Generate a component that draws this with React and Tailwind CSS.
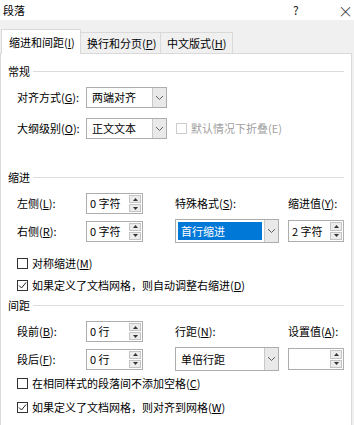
import React from "react";

const font = { fontFamily: '"Microsoft YaHei UI", "Noto Sans CJK SC", "Noto Sans", sans-serif' };

function Key({ label, k, colon = true }) {
  return (
    <span>
      {label}(<u>{k}</u>){colon ? ":" : ""}
    </span>
  );
}

function SectionHeader({ title, className = "" }) {
  return (
    <div className={`flex items-center h-[14px] pl-[7px] pr-[7px] ${className}`}>
      <span className="w-[25px] shrink-0">{title}</span>
      <div className="flex-1 h-px bg-[#dcdcdc]" />
    </div>
  );
}

function Chevron() {
  return (
    <svg width="9" height="6" viewBox="0 0 9 6">
      <path d="M1 1 L4.5 4.5 L8 1" fill="none" stroke="#606060" strokeWidth="1" />
    </svg>
  );
}

function Select({ value, width, selected = false, height = "h-[21px]" }) {
  return (
    <div className={`flex ${width} ${height} border border-[#adadad] bg-white`}>
      <div className="flex-1 flex items-center px-[2px] py-[2px]">
        <div
          className={`h-full w-full flex items-center pl-[3px] ${
            selected ? "bg-[#0078d7] text-white" : ""
          }`}
        >
          {value}
        </div>
      </div>
      <div className="w-[14px] flex items-center justify-center bg-[#e9e9e9] border-l border-[#c8c8c8]">
        <Chevron />
      </div>
    </div>
  );
}

function Spin({ value, width = "w-[57px]", height = "h-[21px]" }) {
  return (
    <div className={`flex ${width} ${height} border border-[#adadad] bg-white`}>
      <div className="flex-1 flex items-center pl-[3px]">{value}</div>
      <div className="w-[12px] mr-[1px] flex flex-col justify-center gap-[1px] py-[1px]">
        <div className="flex-1 flex items-center justify-center bg-[#ececec] border border-[#c4c4c4]">
          <svg width="5" height="3" viewBox="0 0 5 3">
            <path d="M0 3 L2.5 0 L5 3 Z" fill="#333" />
          </svg>
        </div>
        <div className="flex-1 flex items-center justify-center bg-[#ececec] border border-[#c4c4c4]">
          <svg width="5" height="3" viewBox="0 0 5 3">
            <path d="M0 0 L2.5 3 L5 0 Z" fill="#333" />
          </svg>
        </div>
      </div>
    </div>
  );
}

function Check({ checked = false, disabled = false, children, className = "" }) {
  return (
    <div className={`flex items-center h-[14px] ${className}`}>
      <div
        className={`w-[11px] h-[11px] border bg-white flex items-center justify-center mr-[4px] ${
          disabled ? "border-[#cccccc]" : "border-[#333333]"
        }`}
      >
        {checked && (
          <svg width="9" height="9" viewBox="0 0 9 9">
            <path d="M1 4.5 L3.5 7 L8 1.5" fill="none" stroke="#222" strokeWidth="1" />
          </svg>
        )}
      </div>
      <span className={disabled ? "text-[#a0a0a0]" : ""}>{children}</span>
    </div>
  );
}

function Row({ label, control, label3, control3, label4, control4, className = "", h = "h-[21px]" }) {
  return (
    <div className={`flex items-center pl-[16px] ${h} ${className}`}>
      <div className="w-[69px]">{label}</div>
      <div className="w-[89px]">{control}</div>
      <div className="w-[113px]">{control3 || label3}</div>
      <div>{control4 || label4}</div>
    </div>
  );
}

export default function App() {
  return (
    <div
      className="w-[354px] h-[425px] bg-[#f0f0f0] overflow-hidden text-[11px] text-black leading-none flex flex-col"
      style={font}
    >
      {/* title bar */}
      <div className="h-[20px] bg-white flex items-center pl-[3px] shrink-0">
        <span className="flex-1 text-[11px]">段落</span>
        <span className="w-[45px] text-[12px] text-[#222]">?</span>
        <span className="w-[16px] text-[15px] font-light text-[#222]">×</span>
      </div>

      {/* tabs */}
      <div className="flex items-end pt-[9px] pl-[1px] shrink-0 relative z-10">
        <div className="w-[80px] h-[25px] bg-white border border-b-0 border-[#d9d9d9] flex items-center pl-[7px] -mb-px">
          缩进和间距(<u>I</u>)
        </div>
        <div className="w-[80px] h-[21px] border border-l-0 border-b-0 border-[#d9d9d9] flex items-center pl-[6px]">
          换行和分页(<u>P</u>)
        </div>
        <div className="w-[72px] h-[21px] border border-l-0 border-b-0 border-[#d9d9d9] flex items-center pl-[6px]">
          中文版式(<u>H</u>)
        </div>
      </div>

      {/* panel */}
      <div className="flex-1 ml-0 mr-[2px] bg-white border border-b-0 border-[#d9d9d9]">
        <SectionHeader title="常规" className="mt-[10px]" />

        <div className="flex items-center pl-[16px] h-[21px] mt-[9px]">
          <div className="w-[69px]"><Key label="对齐方式" k="G" /></div>
          <Select value="两端对齐" width="w-[81px]" />
        </div>
        <div className="flex items-center pl-[16px] h-[21px] mt-[10px]">
          <div className="w-[69px]"><Key label="大纲级别" k="O" /></div>
          <Select value="正文文本" width="w-[81px]" />
          <Check disabled className="ml-[9px]">默认情况下折叠(E)</Check>
        </div>

        <SectionHeader title="缩进" className="mt-[31px]" />

        <Row
          className="mt-[9px]"
          label={<Key label="左侧" k="L" />}
          control={<Spin value="0 字符" />}
          label3={<Key label="特殊格式" k="S" />}
          label4={<Key label="缩进值" k="Y" />}
        />
        <Row
          className="mt-[5px]"
          h="h-[24px]"
          label={<Key label="右侧" k="R" />}
          control={<Spin value="0 字符" />}
          control3={<Select value="首行缩进" width="w-[104px]" selected height="h-[24px]" />}
          control4={<Spin value="2 字符" width="w-[56px]" height="h-[22px]" />}
        />

        <div className="pl-[16px] mt-[13px]">
          <Check>对称缩进(<u>M</u>)</Check>
          <Check checked className="mt-[8px]">
            如果定义了文档网格，则自动调整右缩进(<u>D</u>)
          </Check>
        </div>

        <SectionHeader title="间距" className="mt-[6px]" />

        <Row
          className="mt-[9px]"
          label={<Key label="段前" k="B" />}
          control={<Spin value="0 行" />}
          label3={<Key label="行距" k="N" />}
          label4={<Key label="设置值" k="A" />}
        />
        <Row
          className="mt-[5px]"
          h="h-[24px]"
          label={<Key label="段后" k="F" />}
          control={<Spin value="0 行" />}
          control3={<Select value="单倍行距" width="w-[104px]" height="h-[24px]" />}
          control4={<Spin value="" width="w-[56px]" height="h-[22px]" />}
        />

        <div className="pl-[16px] mt-[5px]">
          <Check>在相同样式的段落间不添加空格(<u>C</u>)</Check>
          <Check checked className="mt-[10px]">
            如果定义了文档网格，则对齐到网格(<u>W</u>)
          </Check>
        </div>
      </div>
    </div>
  );
}
